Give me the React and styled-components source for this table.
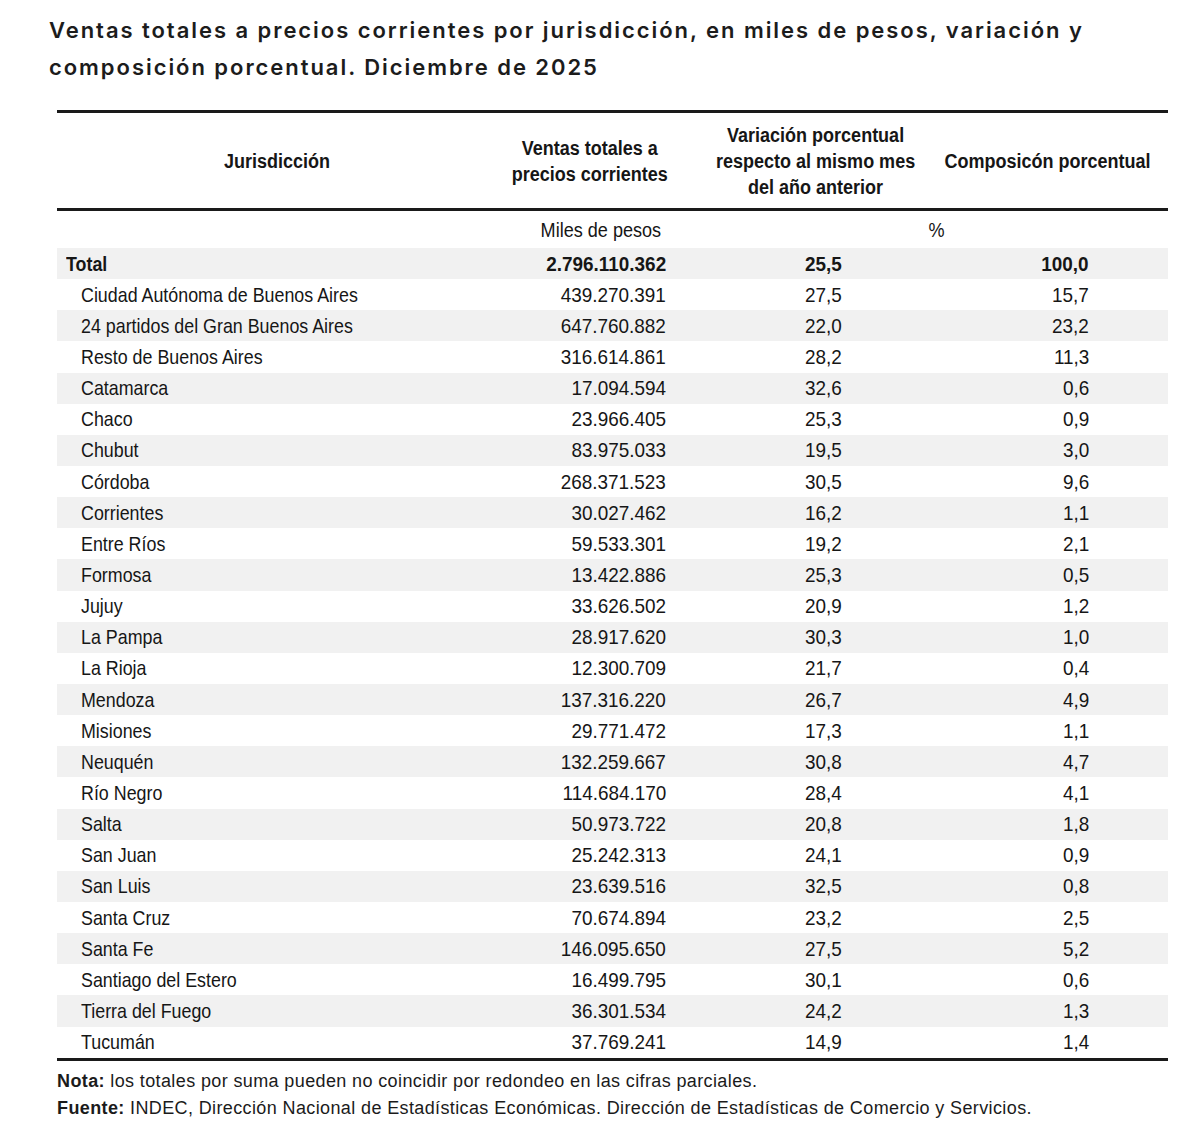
import React from "react";
import styled, { createGlobalStyle } from "styled-components";

const Global = createGlobalStyle`
  html, body { margin: 0; padding: 0; background: #fff; }
  body { font-family: "Liberation Sans", Arial, sans-serif; color: #1b1b1b; }
`;

const Page = styled.div`
  width: 1200px;
  height: 1132px;
  box-sizing: border-box;
  padding: 12px 0 0 49px;
  background: #fff;
`;

const Title = styled.h1`
  margin: 0;
  font-family: Inter, "Noto Sans", sans-serif;
  font-weight: 600;
  font-size: 22px;
  letter-spacing: 1.95px;
  line-height: 37px;
  color: #1c1c1c;
  white-space: nowrap;
`;

const Table = styled.div`
  margin: 24px 0 0 8px;
  width: 1111px;
  font-family: "Liberation Sans", Arial, sans-serif;
  font-size: 21px;
  color: #161616;
`;

const Row = styled.div`
  display: grid;
  grid-template-columns: 448px 170px 282px 211px;
  align-items: center;
  height: ${(p) => p.$h || "31.15px"};
  background: ${(p) => (p.$shade ? "#f1f1f1" : "#fff")};
  border-top: ${(p) => (p.$topRule ? "3px solid #1a1a1a" : "none")};
  border-bottom: ${(p) => (p.$bottomRule ? "3px solid #1a1a1a" : "none")};
  font-weight: ${(p) => (p.$bold ? 700 : 400)};
`;

const HeadCell = styled.div`
  display: flex;
  justify-content: center;
  font-weight: 700;
  font-size: 20px;
  line-height: 26px;
  text-align: center;
  white-space: nowrap;
  padding-right: ${(p) => p.$pr || 0}px;
`;

const Cell = styled.div`
  text-align: ${(p) => p.$align || "right"};
  padding-left: ${(p) => p.$pl || 0}px;
  padding-right: ${(p) => p.$pr || 0}px;
  white-space: nowrap;
`;

const Narrow = styled.span`
  display: inline-block;
  flex: none;
  transform: scaleX(${(p) => p.$sx || 0.85});
  transform-origin: ${(p) => p.$origin || "right"} center;
`;

const Body = styled.div`
  border-bottom: 3px solid #1a1a1a;
`;

const Notes = styled.div`
  margin: 7px 0 0 8px;
  font-family: "Liberation Sans", Arial, sans-serif;
  font-size: 18px;
  letter-spacing: 0.38px;
  line-height: 27px;
  color: #1b1b1b;
  white-space: nowrap;
`;

const data = [
  ["Ciudad Autónoma de Buenos Aires", "439.270.391", "27,5", "15,7"],
  ["24 partidos del Gran Buenos Aires", "647.760.882", "22,0", "23,2"],
  ["Resto de Buenos Aires", "316.614.861", "28,2", "11,3"],
  ["Catamarca", "17.094.594", "32,6", "0,6"],
  ["Chaco", "23.966.405", "25,3", "0,9"],
  ["Chubut", "83.975.033", "19,5", "3,0"],
  ["Córdoba", "268.371.523", "30,5", "9,6"],
  ["Corrientes", "30.027.462", "16,2", "1,1"],
  ["Entre Ríos", "59.533.301", "19,2", "2,1"],
  ["Formosa", "13.422.886", "25,3", "0,5"],
  ["Jujuy", "33.626.502", "20,9", "1,2"],
  ["La Pampa", "28.917.620", "30,3", "1,0"],
  ["La Rioja", "12.300.709", "21,7", "0,4"],
  ["Mendoza", "137.316.220", "26,7", "4,9"],
  ["Misiones", "29.771.472", "17,3", "1,1"],
  ["Neuquén", "132.259.667", "30,8", "4,7"],
  ["Río Negro", "114.684.170", "28,4", "4,1"],
  ["Salta", "50.973.722", "20,8", "1,8"],
  ["San Juan", "25.242.313", "24,1", "0,9"],
  ["San Luis", "23.639.516", "32,5", "0,8"],
  ["Santa Cruz", "70.674.894", "23,2", "2,5"],
  ["Santa Fe", "146.095.650", "27,5", "5,2"],
  ["Santiago del Estero", "16.499.795", "30,1", "0,6"],
  ["Tierra del Fuego", "36.301.534", "24,2", "1,3"],
  ["Tucumán", "37.769.241", "14,9", "1,4"],
];

function DataRow({ label, ventas, vari, comp, shade, bold, indent }) {
  return (
    <Row $shade={shade} $bold={bold}>
      <Cell $align="left" $pl={indent}>
        <Narrow $origin="left">{label}</Narrow>
      </Cell>
      <Cell $pr={9}>
        <Narrow $sx={0.9}>{ventas}</Narrow>
      </Cell>
      <Cell $pr={115}>
        <Narrow $sx={0.9}>{vari}</Narrow>
      </Cell>
      <Cell $pr={79}>
        <Narrow $sx={0.9}>{comp}</Narrow>
      </Cell>
    </Row>
  );
}

export default function App() {
  return (
    <Page>
      <Global />
      <Title>
        Ventas totales a precios corrientes por jurisdicción, en miles de pesos, variación y
        <br />
        composición porcentual. Diciembre de 2025
      </Title>
      <Table>
        <Row $h="95px" $topRule $bottomRule>
          <HeadCell $pr={8}>
            <Narrow $sx={0.9} $origin="center">Jurisdicción</Narrow>
          </HeadCell>
          <HeadCell>
            <Narrow $sx={0.9} $origin="center">
              Ventas totales a<br />precios corrientes
            </Narrow>
          </HeadCell>
          <HeadCell>
            <Narrow $sx={0.9} $origin="center">
              Variación porcentual<br />respecto al mismo mes<br />del año anterior
            </Narrow>
          </HeadCell>
          <HeadCell $pr={30}>
            <Narrow $sx={0.9} $origin="center">Composicón porcentual</Narrow>
          </HeadCell>
        </Row>
        <Row $h="37px">
          <Cell />
          <Cell $pr={14}>
            <Narrow $sx={0.86}>Miles de pesos</Narrow>
          </Cell>
          <Cell $pr={12}>
            <Narrow $sx={0.86}>%</Narrow>
          </Cell>
          <Cell />
        </Row>
        <Body>
          <DataRow label="Total" ventas="2.796.110.362" vari="25,5" comp="100,0" shade bold indent={9} />
          {data.map((r, i) => (
            <DataRow
              key={r[0]}
              label={r[0]}
              ventas={r[1]}
              vari={r[2]}
              comp={r[3]}
              shade={i % 2 === 1}
              indent={24}
            />
          ))}
        </Body>
      </Table>
      <Notes>
        <div>
          <b>Nota:</b> los totales por suma pueden no coincidir por redondeo en las cifras parciales.
        </div>
        <div>
          <b>Fuente:</b> INDEC, Dirección Nacional de Estadísticas Económicas. Dirección de Estadísticas de Comercio y Servicios.
        </div>
      </Notes>
    </Page>
  );
}
